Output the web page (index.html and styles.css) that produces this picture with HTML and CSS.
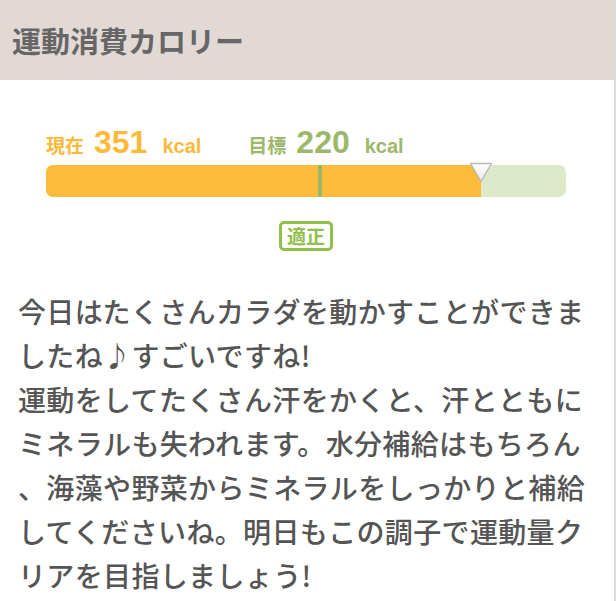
FILE: index.html
```html
<!DOCTYPE html>
<html lang="ja">
<head>
<meta charset="utf-8">
<link rel="stylesheet" href="styles.css">
</head>
<body>
<div class="page">
  <header class="head">
    <h1 class="title">運動消費カロリー</h1>
  </header>
  <section class="meter">
    <div class="labels">
      <div class="stat now">
        <span class="lbl">現在</span><span class="num">351</span><span class="unit">kcal</span>
      </div>
      <div class="stat goal">
        <span class="lbl">目標</span><span class="num">220</span><span class="unit">kcal</span>
      </div>
    </div>
    <div class="bar">
      <div class="fill" style="width: 83.6%"></div>
      <div class="target" style="left: 52.7%"></div>
      <svg class="pointer" style="left: 83.6%" width="24" height="21" viewBox="0 0 24 21">
        <defs>
          <linearGradient id="g" x1="0" y1="0" x2="0" y2="1">
            <stop offset="0" stop-color="#ffffff"/>
            <stop offset="1" stop-color="#e9e9e9"/>
          </linearGradient>
        </defs>
        <path d="M1.5 1.5 H22.5 L12 19.5 Z" fill="url(#g)" stroke="#b9b9b9" stroke-width="1.4" stroke-linejoin="round"/>
      </svg>
    </div>
    <div class="badge-row">
      <span class="badge">適正</span>
    </div>
  </section>
  <p class="message">今日はたくさんカラダを動かすことができましたね♪すごいですね!<br>運動をしてたくさん汗をかくと、汗とともにミネラルも失われます。水分補給はもちろん、海藻や野菜からミネラルをしっかりと補給してくださいね。明日もこの調子で運動量クリアを目指しましょう!</p>
</div>
</body>
</html>
```
FILE: styles.css
```css
html, body {
  margin: 0;
  padding: 0;
  background: #ffffff;
}
.page {
  width: 614px;
  min-height: 601px;
  border-right: 2px solid #dcdcdc;
  font-family: "Noto Sans CJK JP", "Noto Sans", sans-serif;
}
.head {
  height: 80px;
  background: #e3d9d4;
  display: flex;
  align-items: center;
  padding-left: 12px;
}
.title {
  margin: 0;
  font-size: 29px;
  font-weight: 700;
  color: #666666;
  line-height: 1;
}
.meter {
  padding: 44px 48px 0 46px;
}
.labels {
  display: flex;
  align-items: baseline;
  gap: 47px;
  height: 41px;
}
.stat {
  display: flex;
  align-items: baseline;
  white-space: nowrap;
}
.lbl {
  font-size: 19px;
  font-weight: 700;
  margin-right: 10px;
}
.num {
  font-family: "Liberation Sans", "Noto Sans", sans-serif;
  font-size: 32px;
  font-weight: 700;
  margin-right: 15px;
}
.unit {
  font-family: "Liberation Sans", "Noto Sans", sans-serif;
  font-size: 20px;
  font-weight: 700;
}
.now { color: #fcb93a; }
.goal { color: #9db86a; }
.bar {
  position: relative;
  height: 32px;
  border-radius: 7px;
  background: #dee9c9;
}
.fill {
  height: 100%;
  background: #fdbb3b;
  border-radius: 7px 0 0 7px;
}
.target {
  position: absolute;
  top: 0;
  bottom: 0;
  width: 4px;
  margin-left: -2px;
  background: #9cb769;
}
.pointer {
  position: absolute;
  top: -3px;
  margin-left: -12px;
}
.badge-row {
  display: flex;
  justify-content: center;
  margin-top: 24px;
}
.badge {
  display: inline-block;
  border: 3px solid #8fc04b;
  border-radius: 5px;
  color: #8fc04b;
  font-size: 19px;
  font-weight: 700;
  line-height: 24px;
  padding: 0 5px;
}
.message {
  margin: 38px 0 0 0;
  padding: 0 14px 0 18px;
  font-size: 28px;
  font-weight: 500;
  letter-spacing: 0.35px;
  line-height: 44px;
  color: #555555;
  line-break: anywhere;
}
```
